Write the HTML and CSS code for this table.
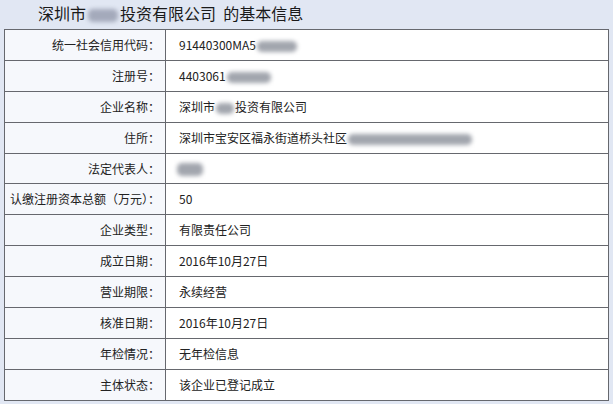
FILE: index.html
```html
<!DOCTYPE html>
<html lang="zh">
<head>
<meta charset="utf-8">
<link rel="stylesheet" href="styles.css">
</head>
<body>
<div class="title">深圳市<span class="blur blur-title"></span>投资有限公司&nbsp;&nbsp;的基本信息</div>
<table class="info">
  <tr><td class="label">统一社会信用代码：</td><td class="value">91440300MA5<span class="blur" style="width:40px"></span></td></tr>
  <tr><td class="label">注册号：</td><td class="value">4403061<span class="blur" style="width:44px"></span></td></tr>
  <tr><td class="label">企业名称：</td><td class="value">深圳市<span class="blur" style="width:18px"></span>投资有限公司</td></tr>
  <tr><td class="label">住所：</td><td class="value">深圳市宝安区福永街道桥头社区<span class="blur" style="width:124px"></span></td></tr>
  <tr><td class="label">法定代表人：</td><td class="value"><span class="blur blur-name" style="width:26px"></span></td></tr>
  <tr><td class="label">认缴注册资本总额（万元）：</td><td class="value">50</td></tr>
  <tr><td class="label">企业类型：</td><td class="value">有限责任公司</td></tr>
  <tr><td class="label">成立日期：</td><td class="value">2016年10月27日</td></tr>
  <tr><td class="label">营业期限：</td><td class="value">永续经营</td></tr>
  <tr><td class="label">核准日期：</td><td class="value">2016年10月27日</td></tr>
  <tr><td class="label">年检情况：</td><td class="value">无年检信息</td></tr>
  <tr><td class="label">主体状态：</td><td class="value">该企业已登记成立</td></tr>
</table>
</body>
</html>
```
FILE: styles.css
```css
html, body {
  margin: 0;
  padding: 0;
  background: #e1e7f3;
}
body {
  font-family: "Noto Sans CJK SC", "Noto Sans", sans-serif;
  color: #222;
  width: 613px;
  height: 404px;
  overflow: hidden;
}
.title {
  height: 29px;
  line-height: 27px;
  padding-left: 38px;
  font-size: 16px;
  color: #1a1a1a;
  white-space: nowrap;
}
.info {
  margin-left: 4px;
  width: 605px;
  border-collapse: collapse;
  font-size: 12px;
  table-layout: fixed;
}
.info td {
  border: 1px solid #66686e;
  height: 29.9px;
  padding: 0;
  line-height: 14px;
  white-space: nowrap;
}
.label {
  width: 155px;
  text-align: right;
  padding-right: 5px !important;
  background: #f6f8fc;
  color: #222;
}
.value {
  padding-left: 13px !important;
  background: #fff;
  color: #222;
}
.blur {
  display: inline-block;
  height: 11px;
  vertical-align: middle;
  background: #a2a6ae;
  border-radius: 5px;
  filter: blur(2px);
  margin: 0 1px;
}
.blur-title {
  width: 30px;
  height: 13px;
  margin: 0 2px;
  background: #a4aabb;
}
.blur-name {
  height: 13px;
  margin-left: -2px;
}
```
